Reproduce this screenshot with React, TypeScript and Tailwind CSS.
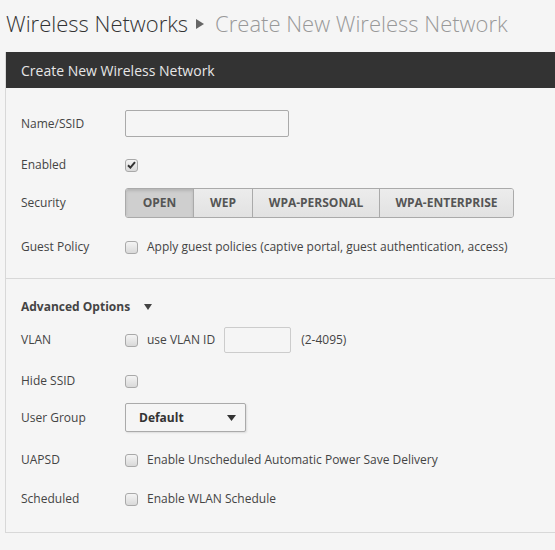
import { useState } from "react";

const Checkbox = ({ checked = false }: { checked?: boolean }) => {
  return (
    <span className="flex h-[13px] w-[13px] shrink-0 items-center justify-center rounded-[3px] border border-[#a9a9a9] bg-gradient-to-b from-[#f4f4f4] to-[#d9d9d9]">
      {checked && (
        <svg width="9" height="8" viewBox="0 0 9 8">
          <path d="M1 4.2 L3.4 6.6 L8 1.2" stroke="#333" strokeWidth="2" fill="none" />
        </svg>
      )}
    </span>
  );
};

const Row = ({
  label,
  className,
  children,
}: {
  label: string;
  className: string;
  children?: React.ReactNode;
}) => {
  return (
    <div className={`flex items-center ${className}`}>
      <div className="w-[104px] shrink-0">{label}</div>
      {children}
    </div>
  );
};

const securityTypes = ["OPEN", "WEP", "WPA-PERSONAL", "WPA-ENTERPRISE"];
const securityWidths = ["w-[67px]", "w-[59px]", "w-[127px]", "w-[134px]"];

const App = () => {
  const [security, setSecurity] = useState("OPEN");

  return (
    <div className="min-h-[550px] bg-[#f5f5f5] font-['Open_Sans',sans-serif] text-[12px] text-[#444]">
      <h1 className="flex h-[46px] items-center px-[6px] text-[22px] font-light">
        <span className="text-[#333]">Wireless Networks</span>
        <svg width="8" height="10" viewBox="0 0 8 10" className="ml-[8px] mr-[11px] mt-[2px]">
          <path d="M0 0 L8 5 L0 10 Z" fill="#666" />
        </svg>
        <span className="text-[#999]">Create New Wireless Network</span>
      </h1>

      <div className="ml-[5px] mt-[6px] border-b border-l border-[#d8d8d8]">
        <div className="flex h-[36px] items-center bg-[#333] px-[15px] text-[14px] text-[#e6e6e6]">
          Create New Wireless Network
        </div>

        <div className="pb-[21px] pl-[15px] pr-[16px] pt-[22px]">
          <Row label="Name/SSID" className="h-[27px]">
            <input className="h-[27px] w-[164px] rounded-[2px] border border-[#aaa] bg-[#f5f5f5] px-2 outline-none" />
          </Row>
          <Row label="Enabled" className="mt-[18px] h-[20px]">
            <Checkbox checked />
          </Row>
          <Row label="Security" className="mt-[13px] h-[30px]">
            <div className="flex h-[30px] overflow-hidden rounded-[3px] border border-[#aaa] text-[12px] font-bold text-[#555]">
              {securityTypes.map((type, i) => (
                <button
                  key={type}
                  onClick={() => setSecurity(type)}
                  className={`${i > 0 ? "border-l border-[#aaa]" : ""} ${
                    type === security
                      ? "bg-[#cfcfcf] shadow-[inset_0_2px_3px_rgba(0,0,0,0.12)]"
                      : "bg-gradient-to-b from-[#ececec] to-[#e2e2e2]"
                  } ${securityWidths[i]}`}
                >
                  {type}
                </button>
              ))}
            </div>
          </Row>
          <Row label="Guest Policy" className="mt-[19px] h-[20px]">
            <Checkbox />
            <span className="ml-[9px]">
              Apply guest policies (captive portal, guest authentication, access)
            </span>
          </Row>
        </div>

        <div className="border-t border-[#d8d8d8] pb-[23px] pl-[15px] pr-[16px] pt-[18px]">
          <div className="flex h-[20px] items-center font-bold text-[#444]">
            Advanced Options
            <svg width="8" height="6" viewBox="0 0 8 6" className="ml-[14px]">
              <path d="M0 0 L8 0 L4 6 Z" fill="#444" />
            </svg>
          </div>
          <Row label="VLAN" className="mt-[10px] h-[26px]">
            <Checkbox />
            <span className="ml-[9px]">use VLAN ID</span>
            <input className="ml-[9px] h-[26px] w-[67px] rounded-[2px] border border-[#ccc] bg-[#f5f5f5] px-2 outline-none" />
            <span className="ml-[10px]">(2-4095)</span>
          </Row>
          <Row label="Hide SSID" className="mt-[18px] h-[20px]">
            <Checkbox />
          </Row>
          <Row label="User Group" className="mt-[12px] h-[29px]">
            <div className="flex h-[29px] w-[121px] items-center justify-between rounded-[2px] border border-[#aaa] bg-[#f5f5f5] pl-[13px] pr-[9px] text-[12px] font-bold text-[#333] shadow-[1px_1px_2px_rgba(0,0,0,0.1)]">
              Default
              <svg width="9" height="6" viewBox="0 0 9 6">
                <path d="M0 0 L9 0 L4.5 6 Z" fill="#333" />
              </svg>
            </div>
          </Row>
          <Row label="UAPSD" className="mt-[18px] h-[20px]">
            <Checkbox />
            <span className="ml-[9px]">Enable Unscheduled Automatic Power Save Delivery</span>
          </Row>
          <Row label="Scheduled" className="mt-[19px] h-[20px]">
            <Checkbox />
            <span className="ml-[9px]">Enable WLAN Schedule</span>
          </Row>
        </div>
      </div>
    </div>
  );
};

export default App;
